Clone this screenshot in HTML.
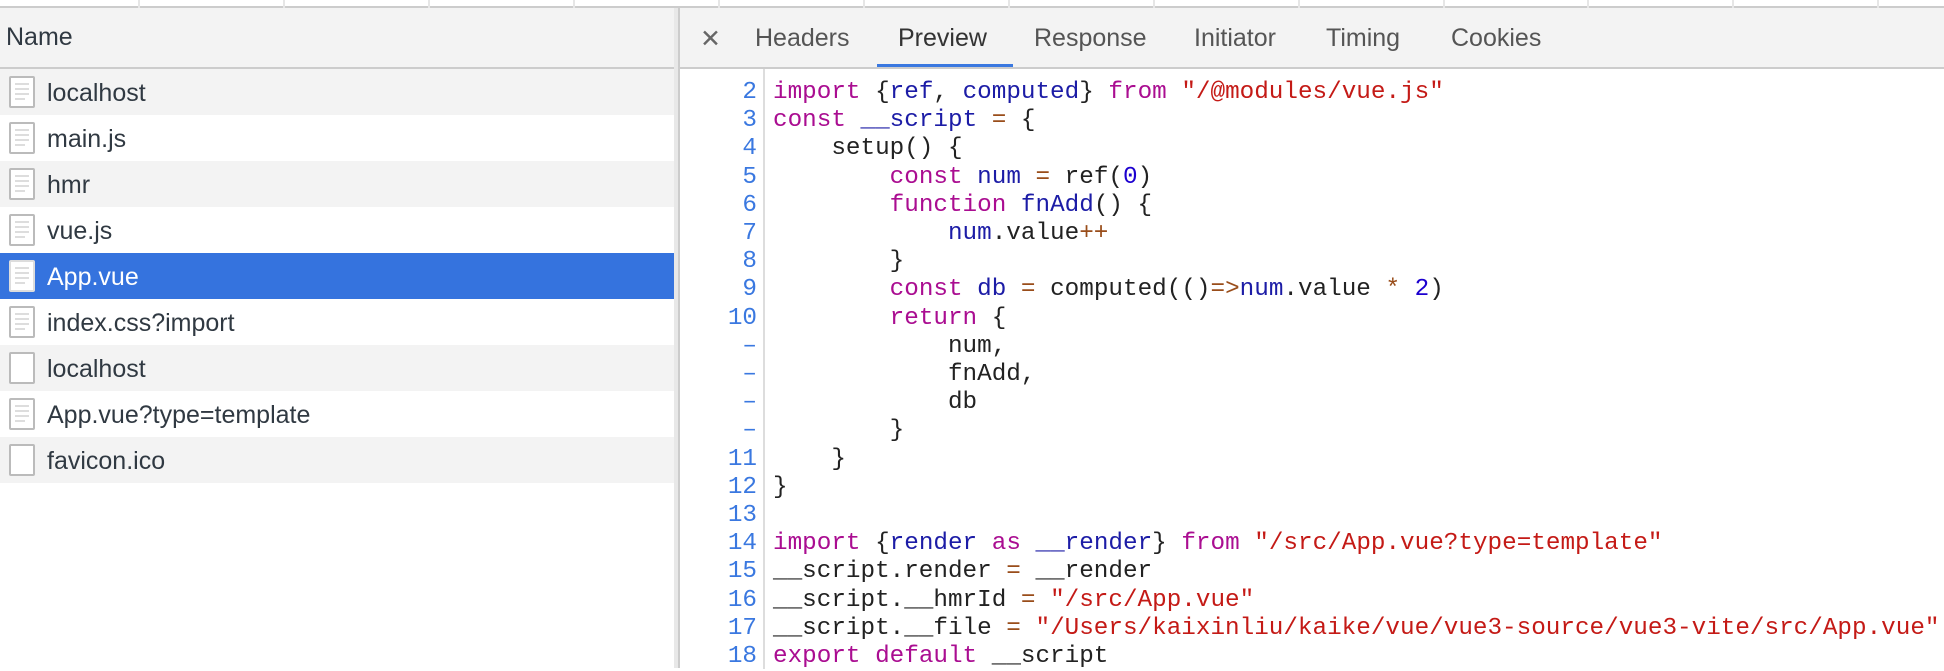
<!DOCTYPE html>
<html><head><meta charset="utf-8"><style>
*{margin:0;padding:0;box-sizing:border-box}
body{width:1944px;height:668px;overflow:hidden;background:#fff;position:relative;font-family:"Liberation Sans",sans-serif}
.top{position:absolute;left:0;top:0;width:1944px;height:8px;background:#fff;border-bottom:2px solid #ccc}
.top i{position:absolute;top:0;width:2px;height:8px;background:#e6e6e6}
.left{position:absolute;left:0;top:8px;width:674px;height:660px;background:#fff}
.hdr{height:61px;background:#f3f3f3;border-bottom:2px solid #ccc;font-size:25px;color:#303942;padding:15px 0 0 6px}
.row{height:46px;position:relative;font-size:25px;color:#303942;line-height:48px;padding-left:47px}
.row.g{background:#f3f3f3}
.row.sel{background:#3573de;color:#fff}
.ic{position:absolute;left:9px;top:7px;width:26px;height:32px;background:#fff;border:2px solid #bbb;border-radius:2px}
.ic b{position:absolute;left:4px;height:2px;background:#ddd}
.div{position:absolute;left:674px;top:8px;width:6px;height:660px;background:#e8e8e8;border-right:2px solid #ccc}
.tabs{position:absolute;left:680px;top:8px;width:1264px;height:61px;background:#f3f3f3;border-bottom:2px solid #ccc;font-size:25px;color:#555}
.tabs span{position:absolute;top:16px}
.ul{position:absolute;left:197px;top:56px;width:136px;height:3px;background:#3a78e0}
.gut{position:absolute;left:680px;top:69px;width:85px;height:600px;border-right:2px solid #ddd}
.code{position:absolute;top:79px;font-family:"Liberation Mono",monospace;font-size:24.3px;line-height:28.2px;white-space:pre}
.ln{left:680px;width:77px;text-align:right;color:#3a78e0}
.src{left:773px;color:#222}
.k{color:#aa0d91}.v{color:#1c1ca6}.s{color:#c41a16}.o{color:#994d1a}.n{color:#1c00cf}
</style></head><body>
<div class="top"><i style="left:138px"></i><i style="left:283px"></i><i style="left:428px"></i><i style="left:573px"></i><i style="left:718px"></i><i style="left:863px"></i><i style="left:1008px"></i><i style="left:1153px"></i><i style="left:1298px"></i><i style="left:1443px"></i><i style="left:1587px"></i><i style="left:1732px"></i><i style="left:1877px"></i></div>
<div class="left">
<div class="hdr">Name</div>
<div class="row g"><span class="ic"><b style="top:5px;width:14px"></b><b style="top:10px;width:14px"></b><b style="top:15px;width:14px"></b><b style="top:20px;width:10px"></b></span>localhost</div>
<div class="row"><span class="ic"><b style="top:5px;width:14px"></b><b style="top:10px;width:14px"></b><b style="top:15px;width:14px"></b><b style="top:20px;width:10px"></b></span>main.js</div>
<div class="row g"><span class="ic"><b style="top:5px;width:14px"></b><b style="top:10px;width:14px"></b><b style="top:15px;width:14px"></b><b style="top:20px;width:10px"></b></span>hmr</div>
<div class="row"><span class="ic"><b style="top:5px;width:14px"></b><b style="top:10px;width:14px"></b><b style="top:15px;width:14px"></b><b style="top:20px;width:10px"></b></span>vue.js</div>
<div class="row sel"><span class="ic" style="border-color:#ddd"><b style="top:5px;width:14px"></b><b style="top:10px;width:14px"></b><b style="top:15px;width:14px"></b><b style="top:20px;width:10px"></b></span>App.vue</div>
<div class="row"><span class="ic"><b style="top:5px;width:14px"></b><b style="top:10px;width:14px"></b><b style="top:15px;width:14px"></b><b style="top:20px;width:10px"></b></span>index.css?import</div>
<div class="row g"><span class="ic"></span>localhost</div>
<div class="row"><span class="ic"><b style="top:5px;width:14px"></b><b style="top:10px;width:14px"></b><b style="top:15px;width:14px"></b><b style="top:20px;width:10px"></b></span>App.vue?type=template</div>
<div class="row g"><span class="ic"></span>favicon.ico</div>
</div>
<div class="div"></div>
<div class="tabs">
<span style="left:20px;color:#666">✕</span>
<span style="left:75px">Headers</span>
<span style="left:218px;color:#333">Preview</span>
<span style="left:354px">Response</span>
<span style="left:514px">Initiator</span>
<span style="left:646px">Timing</span>
<span style="left:771px">Cookies</span>
<div class="ul"></div>
</div>
<div class="gut"></div>
<div class="code ln">2
3
4
5
6
7
8
9
10
–
–
–
–
11
12
13
14
15
16
17
18</div>
<div class="code src"><span class="k">import</span> {<span class="v">ref</span>, <span class="v">computed</span>} <span class="k">from</span> <span class="s">"/@modules/vue.js"</span>
<span class="k">const</span> <span class="v">__script</span> <span class="o">=</span> {
    setup() {
        <span class="k">const</span> <span class="v">num</span> <span class="o">=</span> ref(<span class="n">0</span>)
        <span class="k">function</span> <span class="v">fnAdd</span>() {
            <span class="v">num</span>.value<span class="o">++</span>
        }
        <span class="k">const</span> <span class="v">db</span> <span class="o">=</span> computed(()<span class="o">=&gt;</span><span class="v">num</span>.value <span class="o">*</span> <span class="n">2</span>)
        <span class="k">return</span> {
            num,
            fnAdd,
            db
        }
    }
}

<span class="k">import</span> {<span class="v">render</span> <span class="k">as</span> <span class="v">__render</span>} <span class="k">from</span> <span class="s">"/src/App.vue?type=template"</span>
__script.render <span class="o">=</span> __render
__script.__hmrId <span class="o">=</span> <span class="s">"/src/App.vue"</span>
__script.__file <span class="o">=</span> <span class="s">"/Users/kaixinliu/kaike/vue/vue3-source/vue3-vite/src/App.vue"</span>
<span class="k">export</span> <span class="k">default</span> __script</div>
</body></html>
